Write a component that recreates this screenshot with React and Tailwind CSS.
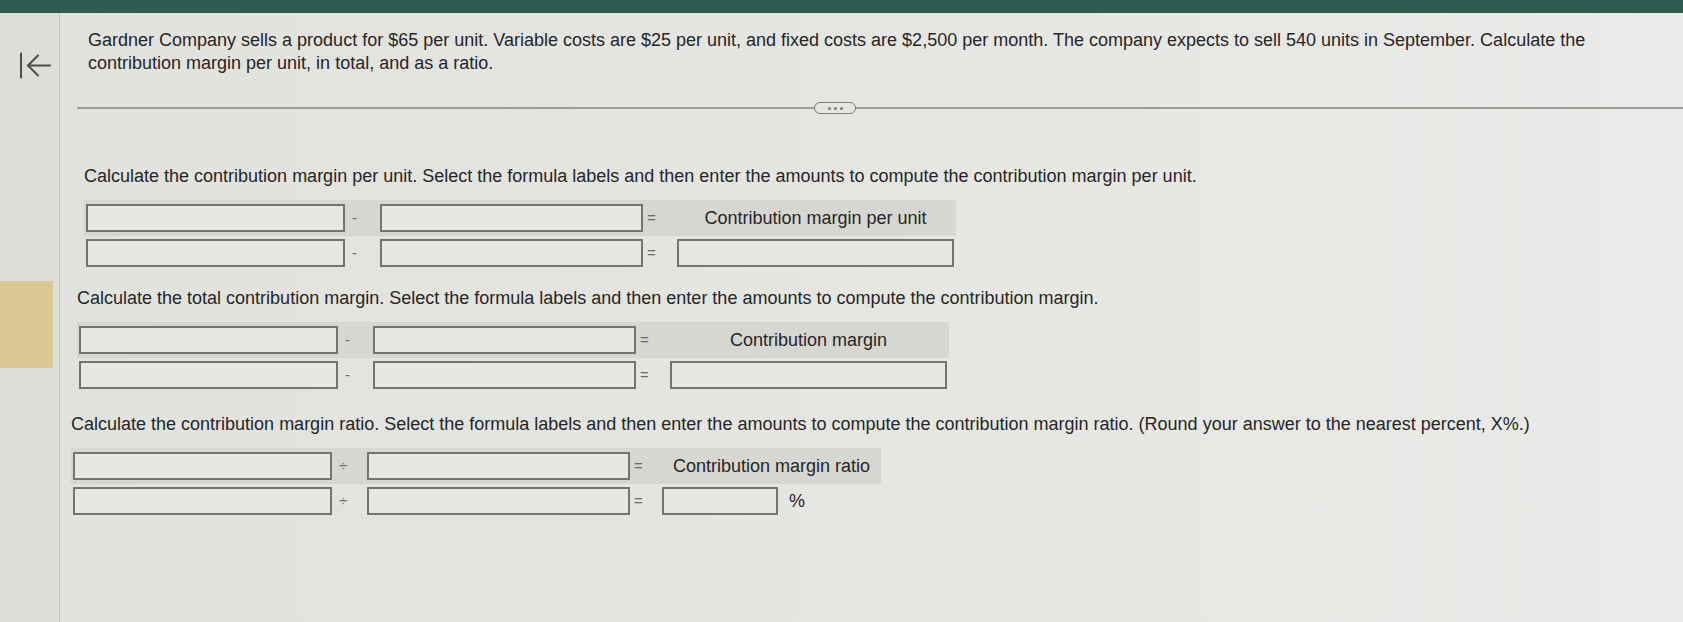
import React from 'react';

const sections = [
  {
    key: 'unit',
    heading:
      'Calculate the contribution margin per unit. Select the formula labels and then enter the amounts to compute the contribution margin per unit.',
    op: '-',
    label: 'Contribution margin per unit',
    ratio: false,
    wrap: 'ml-[7px] mt-[51px]',
  },
  {
    key: 'total',
    heading:
      'Calculate the total contribution margin. Select the formula labels and then enter the amounts to compute the contribution margin.',
    op: '-',
    label: 'Contribution margin',
    ratio: false,
    wrap: 'ml-[0px] mt-[17px]',
  },
  {
    key: 'ratio',
    heading:
      'Calculate the contribution margin ratio. Select the formula labels and then enter the amounts to compute the contribution margin ratio. (Round your answer to the nearest percent, X%.)',
    op: '÷',
    label: 'Contribution margin ratio',
    ratio: true,
    wrap: '-ml-[6px] mt-[21px]',
  },
];

function Box({ className = 'w-[259px]' }) {
  return <div className={`h-[28px] border-2 border-[#74746f] bg-[#e7e7e4] ${className}`} />;
}

function Sign({ children, className = 'w-[35px] pl-[7px]' }) {
  return (
    <div className={`flex items-center text-[15px] text-[#6b6b6b] ${className}`}>
      {children}
    </div>
  );
}

function FormulaTable({ op, label, ratio }) {
  return (
    <div className="mt-[13px] w-fit">
      {/* label row */}
      <div className="flex h-[36px] items-center bg-[#d6d6d2] pl-[2px]">
        <Box />
        <Sign>{op}</Sign>
        <Box className="w-[263px]" />
        <Sign className="w-[32px] pl-[4px]">=</Sign>
        <div className={`text-center text-[18px] text-[#262626] ${ratio ? 'w-[219px]' : 'w-[281px]'}`}>
          {label}
        </div>
      </div>
      {/* amount row */}
      <div className="flex h-[34px] items-center pl-[2px]">
        <Box />
        <Sign>{op}</Sign>
        <Box className="w-[263px]" />
        <Sign className="w-[32px] pl-[4px]">=</Sign>
        {ratio ? (
          <div className="flex items-center">
            <Box className="w-[116px]" />
            <span className="ml-[11px] text-[18px] text-[#262626]">%</span>
          </div>
        ) : (
          <Box className="ml-[2px] w-[277px]" />
        )}
      </div>
    </div>
  );
}

function BackIcon() {
  return (
    <svg width="32" height="27" viewBox="0 0 32 27" fill="none" stroke="#4d4d4b" strokeWidth="2" strokeLinecap="round">
      <line x1="2" y1="1.5" x2="2" y2="25.5" />
      <line x1="9" y1="13.5" x2="31" y2="13.5" />
      <polyline points="19,3.5 9,13.5 19,23.5" fill="none" />
    </svg>
  );
}

export default function App() {
  return (
    <div
      className="flex h-[622px] w-full flex-col overflow-hidden bg-gradient-to-r from-[#e1e1de] via-[#e5e5e2] to-[#eaeae8] text-[#262626]"
      style={{ fontFamily: '"Liberation Sans", Arial, sans-serif' }}
    >
      <div className="h-[13px] shrink-0 bg-[#2e5b50]" />

      <div className="flex flex-1">
        {/* Side rail */}
        <div className="flex w-[60px] shrink-0 flex-col border-r border-[#c3c3bf] bg-[#dddddA]">
          <div className="ml-[19px] mt-[39px]">
            <BackIcon />
          </div>
          <div className="mt-[202px] h-[87px] w-[53px] bg-[#d9c995]" />
        </div>

        {/* Main */}
        <div className="flex-1 pl-[17px]">
          <p className="pl-[11px] pt-[16px] text-[18px] leading-[23px]">
            Gardner Company sells a product for $65 per unit. Variable costs are $25 per unit, and fixed costs are
            $2,500 per month. The company expects to sell 540 units in September. Calculate the
            <br />
            contribution margin per unit, in total, and as a ratio.
          </p>

          <div className="mt-[27px] flex h-[12px] items-center">
            <div className="h-[2px] w-[737px] bg-[#9c9c99]" />
            <div className="flex h-[12px] w-[42px] items-center justify-center gap-[3px] rounded-full border-[1.5px] border-[#7a7a77]">
              <span className="h-[3px] w-[3px] rounded-full bg-[#7a7a77]" />
              <span className="h-[3px] w-[3px] rounded-full bg-[#7a7a77]" />
              <span className="h-[3px] w-[3px] rounded-full bg-[#7a7a77]" />
            </div>
            <div className="h-[2px] flex-1 bg-[#9c9c99]" />
          </div>

          {sections.map((s) => (
            <div key={s.key} className={s.wrap}>
              <p className="text-[18px] leading-[22px]">{s.heading}</p>
              <FormulaTable op={s.op} label={s.label} ratio={s.ratio} />
            </div>
          ))}
        </div>
      </div>
    </div>
  );
}
